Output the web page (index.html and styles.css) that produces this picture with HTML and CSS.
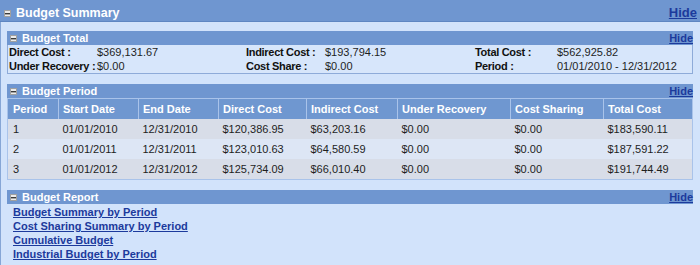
FILE: index.html
```html
<!DOCTYPE html>
<html lang="en">
<head>
    <meta charset="UTF-8">
    <title>Budget Summary</title>
    <link rel="stylesheet" href="styles.css">
</head>
<body>
    <div class="panel">
        <div class="panel-head">
            <span class="panel-title">
                <svg class="toggle" width="7" height="7" viewBox="0 0 7 7"><rect x="0.5" y="0.5" width="6" height="6" fill="#ececec" stroke="#a0a0a0"/><rect x="1" y="3" width="5" height="1.4" fill="#3a3a3a"/></svg>
                Budget Summary
            </span>
            <a href="#" class="hide hide-main">Hide</a>
        </div>
        <div class="panel-body">

            <!-- totals -->
            <div class="section">
                <div class="section-head">
                    <span class="section-title">
                        <svg class="toggle" width="7" height="7" viewBox="0 0 7 7"><rect x="0.5" y="0.5" width="6" height="6" fill="#ececec" stroke="#a0a0a0"/><rect x="1" y="3" width="5" height="1.4" fill="#3a3a3a"/></svg>
                        Budget Total
                    </span>
                    <a href="#" class="hide">Hide</a>
                </div>
                <div class="totals">
                    <span class="label">Direct Cost :</span><span>$369,131.67</span>
                    <span class="label">Indirect Cost :</span><span>$193,794.15</span>
                    <span class="label">Total Cost :</span><span>$562,925.82</span>
                    <span class="label">Under Recovery :</span><span>$0.00</span>
                    <span class="label">Cost Share :</span><span>$0.00</span>
                    <span class="label">Period :</span><span>01/01/2010 - 12/31/2012</span>
                </div>
            </div>

            <!-- periods -->
            <div class="section">
                <div class="section-head">
                    <span class="section-title">
                        <svg class="toggle" width="7" height="7" viewBox="0 0 7 7"><rect x="0.5" y="0.5" width="6" height="6" fill="#ececec" stroke="#a0a0a0"/><rect x="1" y="3" width="5" height="1.4" fill="#3a3a3a"/></svg>
                        Budget Period
                    </span>
                    <a href="#" class="hide">Hide</a>
                </div>
                <table class="periods">
                    <colgroup>
                        <col style="width:51px"><col style="width:80px"><col style="width:80px"><col style="width:88px">
                        <col style="width:91px"><col style="width:113px"><col style="width:93px"><col style="width:89px">
                    </colgroup>
                    <thead>
                        <tr>
                            <th>Period</th><th>Start Date</th><th>End Date</th><th>Direct Cost</th>
                            <th>Indirect Cost</th><th>Under Recovery</th><th>Cost Sharing</th><th>Total Cost</th>
                        </tr>
                    </thead>
                    <tbody>
                        <tr class="odd">
                            <td>1</td><td>01/01/2010</td><td>12/31/2010</td><td>$120,386.95</td>
                            <td>$63,203.16</td><td>$0.00</td><td>$0.00</td><td>$183,590.11</td>
                        </tr>
                        <tr class="even">
                            <td>2</td><td>01/01/2011</td><td>12/31/2011</td><td>$123,010.63</td>
                            <td>$64,580.59</td><td>$0.00</td><td>$0.00</td><td>$187,591.22</td>
                        </tr>
                        <tr class="odd">
                            <td>3</td><td>01/01/2012</td><td>12/31/2012</td><td>$125,734.09</td>
                            <td>$66,010.40</td><td>$0.00</td><td>$0.00</td><td>$191,744.49</td>
                        </tr>
                    </tbody>
                </table>
            </div>

            <!-- reports -->
            <div class="section">
                <div class="section-head">
                    <span class="section-title">
                        <svg class="toggle" width="7" height="7" viewBox="0 0 7 7"><rect x="0.5" y="0.5" width="6" height="6" fill="#ececec" stroke="#a0a0a0"/><rect x="1" y="3" width="5" height="1.4" fill="#3a3a3a"/></svg>
                        Budget Report
                    </span>
                    <a href="#" class="hide">Hide</a>
                </div>
                <div class="reports">
                    <a href="#">Budget Summary by Period</a>
                    <a href="#">Cost Sharing Summary by Period</a>
                    <a href="#">Cumulative Budget</a>
                    <a href="#">Industrial Budget by Period</a>
                </div>
            </div>

        </div>
    </div>
</body>
</html>
```

FILE: styles.css
```css
body {
    margin: 0;
    font-family: "Liberation Sans", Arial, sans-serif;
    font-size: 11px;
    color: #1e1e1e;
    background-color: #d2e3fb;
}
.panel {
    min-height: 265px;
    border-left: 1px solid #86a6d6;
    box-sizing: border-box;
}
.panel-head {
    display: flex;
    justify-content: space-between;
    align-items: center;
    padding: 5px 3px 0 4px;
    line-height: 16px;
    background-color: #6f96d0;
    border-bottom: 1px solid #5e86c2;
    margin-left: -1px;
}
.panel-title {
    display: flex;
    align-items: center;
    color: white;
    font-weight: bold;
    font-size: 12.5px;
}
.toggle {
    margin-right: 5px;
    flex-shrink: 0;
}
.hide {
    color: #1c3a9c;
    font-weight: bold;
    text-decoration: underline;
}
.hide-main {
    font-size: 13px;
}
.panel-body {
    padding: 9px 7px 0 6px;
}
.section {
    margin-bottom: 10px;
}
.section-head {
    display: flex;
    justify-content: space-between;
    align-items: center;
    height: 14px;
    line-height: 14px;
    padding-left: 3px;
    background-color: #6f96d0;
}
.section-title {
    display: flex;
    align-items: center;
    color: white;
    font-weight: bold;
}
.totals {
    display: grid;
    grid-template-columns: 88px 149px 79px 150px 82px 1fr;
    line-height: 14px;
    padding-left: 1px;
    background-color: #d7e6fb;
    border: 1px solid #8eabd9;
    border-top: none;
    white-space: nowrap;
}
.totals .label {
    font-weight: bold;
    color: #111;
    letter-spacing: -0.3px;
}
.periods {
    width: 100%;
    table-layout: fixed;
    border-collapse: collapse;
    border: 1px solid #a9c3ea;
}
.periods th,
.periods td {
    text-align: left;
    padding: 0 4px;
    height: 20px;
    white-space: nowrap;
}
.periods th {
    color: white;
    background-color: #6f97d0;
    border-left: 1px solid #a9c3ea;
}
.periods th:first-child,
.periods td:first-child {
    padding-left: 5px;
}
.periods tr.odd td {
    background-color: #d8dde8;
}
.periods tr.even td {
    background-color: #dde6f5;
}
.reports {
    display: flex;
    flex-direction: column;
    align-items: flex-start;
    padding: 1px 0 0 6px;
    line-height: 14px;
}
.reports a {
    color: #1c3a9c;
    font-weight: bold;
}
```
